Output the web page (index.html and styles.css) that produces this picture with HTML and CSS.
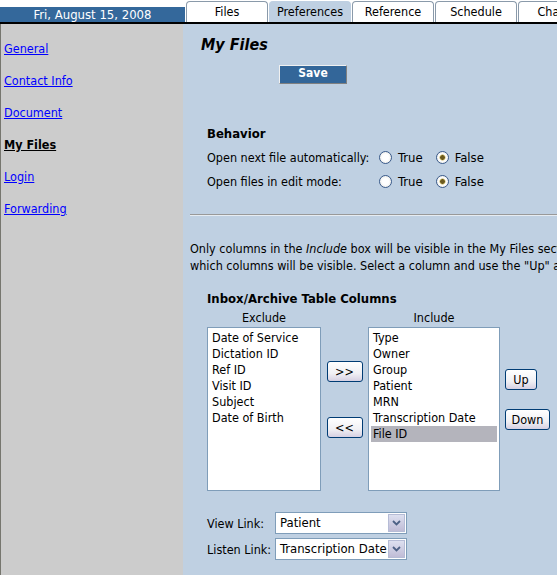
FILE: index.html
```html
<!DOCTYPE html>
<html>
<head>
<meta charset="utf-8">
<link rel="stylesheet" href="styles.css">
</head>
<body>
<div class="top">
  <div class="date">Fri, August 15, 2008</div>
  <nav class="tabs">
    <span class="tab">Files</span>
    <span class="tab active">Preferences</span>
    <span class="tab">Reference</span>
    <span class="tab">Schedule</span>
    <span class="tab">Change</span>
  </nav>
</div>
<div class="body">
  <aside class="side">
    <a href="#">General</a>
    <a href="#">Contact Info</a>
    <a href="#">Document</a>
    <a href="#" class="current">My Files</a>
    <a href="#">Login</a>
    <a href="#">Forwarding</a>
  </aside>
  <main class="main">
    <h1 class="title">My Files</h1>
    <div class="save-wrap"><span class="save">Save</span></div>

    <section class="behavior">
      <h2 class="sub">Behavior</h2>
      <div class="opt-row">
        <span class="opt-label">Open next file automatically:</span>
        <span class="radio"></span><span class="rlabel">True</span>
        <span class="radio on"></span><span class="rlabel">False</span>
      </div>
      <div class="opt-row">
        <span class="opt-label">Open files in edit mode:</span>
        <span class="radio"></span><span class="rlabel">True</span>
        <span class="radio on"></span><span class="rlabel">False</span>
      </div>
    </section>

    <hr class="rule">

    <p class="info">Only columns in the <i>Include</i> box will be visible in the My Files section. Use the arrows to choose<br>which columns will be visible. Select a column and use the "Up" and "Down" buttons to change the order.</p>

    <section class="columns">
      <h2 class="sub">Inbox/Archive Table Columns</h2>
      <div class="col-grid">
        <div class="col">
          <div class="col-head">Exclude</div>
          <div class="list list-ex">
            <div>Date of Service</div>
            <div>Dictation ID</div>
            <div>Ref ID</div>
            <div>Visit ID</div>
            <div>Subject</div>
            <div>Date of Birth</div>
          </div>
        </div>
        <div class="move">
          <span class="btn btn-add">&gt;&gt;</span>
          <span class="btn btn-rem">&lt;&lt;</span>
        </div>
        <div class="col">
          <div class="col-head">Include</div>
          <div class="list list-in">
            <div>Type</div>
            <div>Owner</div>
            <div>Group</div>
            <div>Patient</div>
            <div>MRN</div>
            <div>Transcription Date</div>
            <div class="sel">File ID</div>
          </div>
        </div>
        <div class="order">
          <span class="btn btn-up">Up</span>
          <span class="btn btn-down">Down</span>
        </div>
      </div>
    </section>

    <div class="links">
      <div class="link-row">
        <span class="link-label">View Link:</span>
        <span class="select"><span class="sel-text">Patient</span><span class="arrow"><svg width="9" height="6" viewBox="0 0 9 6"><path d="M1 1 L4.5 4.5 L8 1" fill="none" stroke="#4d6185" stroke-width="1.8"/></svg></span></span>
      </div>
      <div class="link-row">
        <span class="link-label">Listen Link:</span>
        <span class="select"><span class="sel-text">Transcription Date</span><span class="arrow"><svg width="9" height="6" viewBox="0 0 9 6"><path d="M1 1 L4.5 4.5 L8 1" fill="none" stroke="#4d6185" stroke-width="1.8"/></svg></span></span>
      </div>
    </div>
  </main>
</div>
</body>
</html>
```
FILE: styles.css
```css
* { box-sizing: border-box; }
html, body {
  margin: 0;
  padding: 0;
  height: 100%;
  overflow: hidden;
}
body {
  background: #ffffff;
  font-family: "DejaVu Sans Condensed", "DejaVu Sans", sans-serif;
  font-size: 12.5px;
  color: #000;
  width: 557px;
}
.top {
  display: flex;
  height: 24px;
  background: #fff;
}
.date {
  width: 185px;
  flex: none;
  margin-top: 7px;
  height: 17px;
  background: #34689b;
  color: #fff;
  text-align: center;
  line-height: 15px;
  font-size: 13px;
  border-bottom: 2px solid #000;
}
.tabs {
  flex: 1;
  display: flex;
  align-items: flex-end;
  border-bottom: 2px solid #000;
  padding-left: 1px;
  overflow: hidden;
  white-space: nowrap;
}
.tab {
  flex: none;
  width: 82px;
  height: 21px;
  margin-right: 1px;
  background: #fff;
  border: 1px solid #8a9aaa;
  border-bottom: none;
  border-radius: 4px 4px 0 0;
  text-align: center;
  line-height: 19px;
  font-size: 12.5px;
}
.tab.active {
  background: #bfd0e2;
  height: 23px;
  margin-bottom: -2px;
  border-color: #bfd0e2;
  line-height: 19px;
}
.body {
  display: grid;
  grid-template-columns: 183px 1fr;
  height: 551px;
}
.side {
  background: #cccccc;
  border-left: 1px solid #76766e;
  padding: 18px 0 0 3px;
  display: flex;
  flex-direction: column;
  gap: 18px;
}
.side a {
  color: #0000ff;
  text-decoration: underline;
  line-height: 14px;
  font-size: 12.5px;
}
.side a.current {
  color: #000;
  font-weight: bold;
}
.main {
  background: #bfd0e2;
  padding-top: 12px;
  overflow: hidden;
}
.title {
  margin: 0 0 0 18px;
  font-size: 16px;
  font-weight: bold;
  font-style: italic;
  line-height: 18px;
}
.save-wrap {
  margin: 11px 0 0 96px;
}
.save {
  display: inline-block;
  width: 68px;
  height: 19px;
  background: #336699;
  color: #fff;
  font-weight: bold;
  text-align: center;
  line-height: 15px;
  border: 1px solid;
  border-color: #f0f0f0 #808080 #808080 #f0f0f0;
  font-size: 12px;
}
.behavior {
  margin: 42px 0 0 24px;
}
.sub {
  margin: 0;
  font-size: 13px;
  font-weight: bold;
  line-height: 16px;
}
.opt-row {
  display: flex;
  align-items: center;
  height: 24px;
  margin-top: 3px;
}
.opt-row + .opt-row { margin-top: 0; }
.opt-label {
  width: 172px;
  flex: none;
}
.radio {
  width: 13px;
  height: 13px;
  border-radius: 50%;
  border: 1px solid #3a5a8a;
  background: radial-gradient(circle, #ffffff 40%, #e2e2dc 100%);
  display: inline-block;
  flex: none;
}
.radio.on {
  background: radial-gradient(circle, #6b5a20 0 2px, #c9b660 2.5px, #ffffff 3.5px, #e2e2dc 100%);
}
.rlabel {
  margin: 0 13px 0 6px;
  font-size: 13px;
}
.rule {
  margin: 21px 0 0 7px;
  border: none;
  border-top: 1px solid #999;
  border-bottom: 1px solid #e6ecf2;
  height: 0;
}
.info {
  margin: 24px 0 0 7px;
  line-height: 17px;
  white-space: nowrap;
}
.columns {
  margin: 17px 0 0 24px;
}
.col-grid {
  display: flex;
  align-items: flex-start;
}
.col-head {
  text-align: center;
  line-height: 14px;
  margin: 4px 0 2px;
}
.list {
  background: #fff;
  border: 1px solid #7f9db9;
  height: 164px;
  padding: 2px 2px 1px;
  line-height: 16px;
}
.list div { padding-left: 2px; white-space: nowrap; }
.list-ex { width: 114px; }
.list-in { width: 132px; }
.list .sel { background: #b4b4bc; }
.move {
  width: 47px;
  display: flex;
  flex-direction: column;
  align-items: center;
  padding-top: 54px;
  gap: 35px;
}
.btn {
  display: inline-block;
  height: 21px;
  border: 1px solid #003c74;
  border-radius: 3px;
  background: linear-gradient(#ffffff, #f0f0f4 60%, #d6d0e2);
  text-align: center;
  line-height: 19px;
  font-size: 12.5px;
}
.btn-add, .btn-rem { width: 36px; }
.order {
  display: flex;
  flex-direction: column;
  align-items: flex-start;
  padding: 62px 0 0 5px;
  gap: 19px;
}
.btn-up { width: 32px; }
.btn-down { width: 45px; }
.links {
  margin: 21px 0 0 24px;
}
.link-row {
  display: flex;
  align-items: center;
  height: 22px;
}
.link-row + .link-row { margin-top: 4px; }
.link-label {
  width: 68px;
  flex: none;
}
.select {
  display: flex;
  width: 132px;
  height: 22px;
  border: 1px solid #7f9db9;
  background: #fff;
}
.sel-text {
  flex: 1;
  padding: 3px 0 0 4px;
  line-height: 14px;
  white-space: nowrap;
  overflow: hidden;
  font-size: 13px;
}
.arrow {
  width: 17px;
  flex: none;
  margin: 1px;
  background: linear-gradient(#dde0f0, #c0bcd6);
  border: 1px solid #b6bcd6;
  display: flex;
  align-items: center;
  justify-content: center;
}
```
